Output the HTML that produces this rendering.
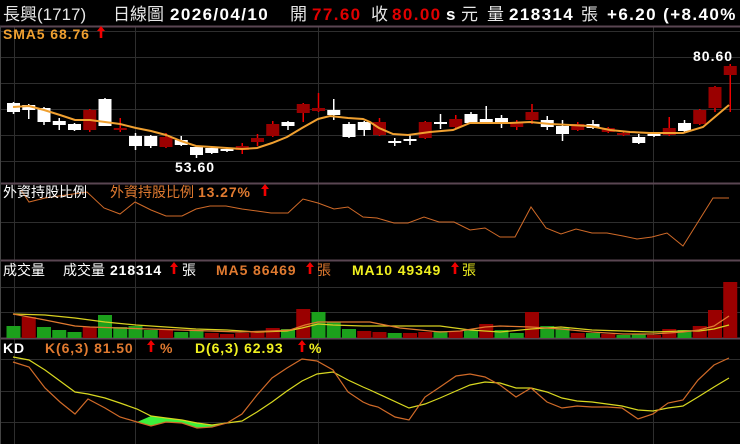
<!DOCTYPE html>
<html><head><meta charset="utf-8"><style>
html,body{margin:0;padding:0;background:#000;width:740px;height:444px;overflow:hidden}
svg{display:block}
text{font-family:"Liberation Sans","Noto Sans CJK TC",sans-serif}
.h{font-size:17px}
.b{font-weight:bold;letter-spacing:1.4px}
.s{font-size:14px}
.sb{font-size:14px;font-weight:bold;letter-spacing:0.9px}
</style></head><body>
<svg id="s" width="740" height="444" xmlns="http://www.w3.org/2000/svg">
<rect width="740" height="444" fill="#000"/>
<g id="grid" stroke="#2e2e2e" stroke-width="1"></g>
<g id="c"></g>
<text x="3" y="20" class="h" fill="#e8e8e8">長興(1717)</text>
<text x="113" y="20" class="h" fill="#e8e8e8">日線圖</text>
<text x="170" y="20" class="h b" fill="#fff">2026/04/10</text>
<text x="290" y="20" class="h" fill="#e8e8e8">開</text>
<text x="312" y="20" class="h b" fill="#e00000">77.60</text>
<text x="371" y="20" class="h" fill="#e8e8e8">收</text>
<text x="392" y="20" class="h b" fill="#e00000">80.00</text>
<text x="446" y="20" class="h b" fill="#fff">s</text>
<text x="461" y="20" class="h" fill="#e8e8e8">元</text>
<text x="487" y="20" class="h" fill="#e8e8e8">量</text>
<text x="509" y="20" class="h b" fill="#fff">218314</text>
<text x="581" y="20" class="h" fill="#e8e8e8">張</text>
<text x="607" y="20" class="h b" fill="#fff">+6.20 (+8.40%</text>
<text x="3" y="39" class="sb" fill="#f0a030">SMA5 68.76</text>
<text x="693" y="61" font-size="14" font-weight="bold" letter-spacing="1" fill="#fff">80.60</text>
<text x="175" y="172" font-size="14" font-weight="bold" letter-spacing="1" fill="#fff">53.60</text>
<text x="3" y="197" class="s" fill="#fff">外資持股比例</text>
<text x="110" y="197" class="s" fill="#e07a30">外資持股比例</text>
<text x="198" y="197" class="sb" fill="#e07a30">13.27%</text>
<text x="3" y="275" class="s" fill="#fff">成交量</text>
<text x="63" y="275" class="s" fill="#fff">成交量</text>
<text x="110" y="275" class="sb" fill="#fff">218314</text>
<text x="182" y="275" class="s" fill="#fff">張</text>
<text x="216" y="275" class="sb" fill="#e07a30">MA5 86469</text>
<text x="317" y="275" class="s" fill="#e07a30">張</text>
<text x="352" y="275" class="sb" fill="#f0f020">MA10 49349</text>
<text x="462" y="275" class="s" fill="#f0f020">張</text>
<text x="3" y="353" class="sb" fill="#fff">KD</text>
<text x="45" y="353" class="sb" fill="#e07a30">K(6,3) 81.50</text>
<text x="160" y="353" class="sb" fill="#e07a30">%</text>
<text x="195" y="353" class="sb" fill="#f0f020">D(6,3) 62.93</text>
<text x="309" y="353" class="sb" fill="#f0f020">%</text>
</svg>
<script>
var NS="http://www.w3.org/2000/svg";
function el(p,t,a){var e=document.createElementNS(NS,t);for(var k in a)e.setAttribute(k,a[k]);p.appendChild(e);return e;}
var g=document.getElementById('grid'),c=document.getElementById('c');
[31,57,83,109,135,161,222,287,312,359,391,422].forEach(function(y){el(g,'line',{x1:0,x2:740,y1:y+.5,y2:y+.5});});
[14,135,318,653].forEach(function(x){el(g,'line',{x1:x+.5,x2:x+.5,y1:26,y2:444});});
[26,183,260,338].forEach(function(y){el(c,'line',{x1:0,x2:740,y1:y+.5,y2:y+.5,stroke:'#5a4652','stroke-width':2});});
el(c,'line',{x1:.5,x2:.5,y1:26,y2:444,stroke:'#444'});
function arrow(x,yb){ // x center, yb baseline
el(c,'path',{d:'M'+x+' '+(yb-12)+' L'+(x+4)+' '+(yb-7)+' L'+(x+1.3)+' '+(yb-7)+' L'+(x+1.3)+' '+yb+' L'+(x-1.3)+' '+yb+' L'+(x-1.3)+' '+(yb-7)+' L'+(x-4)+' '+(yb-7)+' Z',fill:'#f00000'});}
arrow(101,38);arrow(265,196);arrow(174,274);arrow(310,274);arrow(455,274);arrow(151,352);arrow(302,352);
function X(i){return 13.5+i*15.25;}
var C=[['w',103,112,102,114],['w',105,110,104,119],['w',108,122,107,125],['w',121,125,118,130],['w',124,130,123,131],['r',110,130,109,132],['w',99,126,98,126],['r',128,130,118,132],['w',136,146,133,150],['w',136,146,135,148],['r',137,147,133,148],['w',140,145,136,146],['w',147,155,146,158],['w',148,153,147,154],['w',149,151,148,152],['r',146,150,143,154],['r',138,142,134,146],['r',124,136,121,137],['w',122,126,121,130],['r',104,113,103,122],['r',108,111,93,112],['w',110,115,99,120],['w',124,137,122,138],['w',122,130,121,136],['r',122,135,118,136],['w',141,143,138,146],['w',139,141,134,145],['r',122,138,121,139],['w',122,124,114,129],['r',119,127,115,128],['w',114,123,112,124],['w',119,122,106,124],['w',118,124,115,128],['r',122,127,120,130],['r',112,120,104,124],['w',120,127,116,130],['w',126,134,120,141],['r',124,130,122,131],['w',124,128,120,129],['r',128,132,127,133],['r',133,135,132,136],['w',137,143,134,144],['w',134,136,133,137],['r',128,135,117,136],['w',123,131,120,132],['r',110,124,109,125],['r',87,108,86,112],['r',66,75,64,112]];
C.forEach(function(d,i){var x=X(i),red=d[0]=='r';
el(c,'line',{x1:x,x2:x,y1:d[3],y2:d[4],stroke:red?'#e00':'#fff','stroke-width':1.5});
el(c,'rect',{x:x-6.5,y:d[1],width:13,height:Math.max(d[2]-d[1],1.5),fill:red?'#9a0000':'#fff'});});
function pl(pts,col,w,fill){el(c,'polyline',{points:pts,fill:fill||'none',stroke:col,'stroke-width':w||1});}
pl("13,107 29,106 44,110 60,115 75,120 90,120 105,122 120,124 136,128 151,131 166,135 181,141 196,146 212,147 227,148 242,149 257,148 272,143 287,137 302,128 318,119 330,116 348,118 363,119 370,122 379,128 393,134 408,135 430,132 453,130 470,123 490,123 510,123 530,122 550,124 570,125 590,126 610,130 630,132 650,133 683,133 703,127 729,105","#f0a030",2);
pl("21,190 29,202 45,198 87,192 104,208 120,214 135,202 151,210 166,216 182,216 196,209 210,206 226,206 242,209 257,211 271,213 288,213 303,199 318,203 334,209 348,207 363,217 377,218 394,223 408,223 424,217 439,222 454,222 470,230 485,228 500,237 515,237 531,207 546,228 561,234 576,229 592,233 607,233 623,236 637,239 652,237 667,233 683,246 698,222 713,198 729,198","#d06a28",1);
var V=[['g',326],['r',317],['g',327],['g',330],['g',332],['r',327],['g',315],['g',327],['g',326],['g',330],['r',330],['g',332],['g',330],['r',333],['r',334],['r',333],['r',332],['r',328],['g',329],['r',309],['g',312],['g',322],['g',329],['r',331],['r',332],['g',333],['r',333],['r',332],['g',331],['r',331],['g',330],['r',324],['g',330],['g',333],['r',312],['g',326],['g',328],['r',333],['g',333],['r',334],['g',335],['g',334],['r',335],['r',329],['g',330],['r',326],['r',310],['r',282]];
V.forEach(function(d,i){el(c,'rect',{x:X(i)-7,y:d[1],width:14,height:338-d[1],fill:d[0]=='r'?'#9a0000':'#1ca01c'});});
pl("13,314 45,315 75,318 105,322 136,325 166,327 196,329 227,330 257,332 287,331 302,328 318,324 333,325 363,326 370,326 410,326 440,326 470,330 500,332 531,329 561,327 592,330 623,331 653,332 683,331 699,331 714,329 729,325","#d8d020",1.3);
pl("13,314 29,317 45,320 60,323 75,326 90,327 120,328 150,329 180,330 210,331 240,332 270,331 290,330 305,325 318,322 340,322 370,322 400,328 440,332 460,331 485,327 500,326 531,327 561,329 592,332 623,334 653,334 683,332 699,330 714,326 729,316","#e07a30",1.3);
el(c,'polygon',{points:"137,422 151,426 166,422 182,423 197,428 212,427 227,423 229,422 212,425 197,423 182,420 166,418 151,416",fill:'#3cf03c'});
pl("13,357 29,360 45,370 60,381 75,392 88,394 105,398 120,403 137,409 151,416 166,418 182,420 197,423 212,425 227,423 242,421 257,412 272,402 287,391 302,381 317,374 333,372 348,380 363,387 370,390 409,408 425,404 440,398 456,391 470,385 485,382 500,383 516,388 531,388 547,392 562,398 577,401 592,402 607,404 622,406 638,410 653,411 668,408 683,406 698,397 714,387 729,378","#d8d820",1.2);
pl("13,362 29,367 45,388 60,402 75,414 88,399 105,408 120,417 137,422 151,426 166,422 182,423 197,428 212,427 227,423 242,414 257,395 272,378 287,368 302,359 317,361 333,370 348,392 363,402 370,405 378,407 395,417 409,420 425,397 440,387 456,376 470,374 485,377 500,385 516,397 531,388 547,402 562,408 577,406 592,407 607,407 622,408 638,419 653,414 668,403 683,400 698,380 714,365 729,358","#d06a28",1.2);
</script>
</body></html>
